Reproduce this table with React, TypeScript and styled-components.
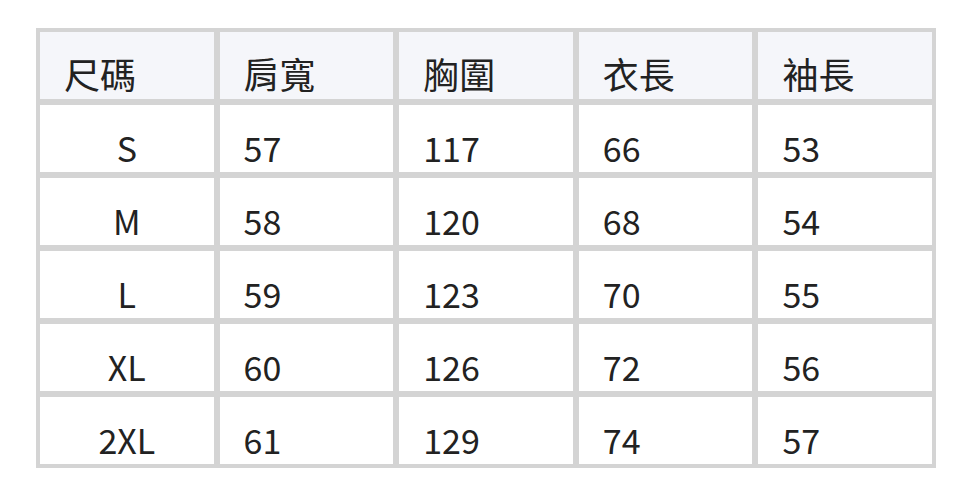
import React from "react";
import styled, { createGlobalStyle } from "styled-components";

const Global = createGlobalStyle`
  html, body { margin: 0; padding: 0; background: #ffffff; }
  body { font-family: "Noto Sans CJK TC", "Noto Sans", sans-serif; }
`;

const Page = styled.div`
  padding: 28px 0 0 36px;
`;

const Table = styled.div`
  display: grid;
  grid-template-columns: repeat(5, 1fr);
  grid-auto-rows: 67px;
  gap: 6px;
  padding: 4px;
  width: 900px;
  box-sizing: border-box;
  background: #d4d4d4;
`;

const Cell = styled.div<{ $head?: boolean; $center?: boolean }>`
  display: flex;
  align-items: flex-end;
  justify-content: ${(p) => (p.$center ? "center" : "flex-start")};
  padding: 0 24px ${(p) => (p.$head ? "0" : "0")};
  background: ${(p) => (p.$head ? "#f5f6fa" : "#ffffff")};
  color: #222222;
  font-family: "Noto Sans CJK TC", "Noto Sans", sans-serif;
  font-size: ${(p) => (p.$head ? "36px" : "34px")};
  line-height: ${(p) => (p.$head ? "44px" : "normal")};
  padding-bottom: ${(p) => (p.$head ? "4px" : "0")};
`;

const headers = ["尺碼", "肩寬", "胸圍", "衣長", "袖長"];
const rows = [
  ["S", "57", "117", "66", "53"],
  ["M", "58", "120", "68", "54"],
  ["L", "59", "123", "70", "55"],
  ["XL", "60", "126", "72", "56"],
  ["2XL", "61", "129", "74", "57"],
];

export default function App() {
  return (
    <>
      <Global />
      <Page>
        <Table>
          {headers.map((h) => (
            <Cell key={h} $head>
              {h}
            </Cell>
          ))}
          {rows.map((r) =>
            r.map((v, i) => (
              <Cell key={r[0] + i} $center={i === 0}>
                {v}
              </Cell>
            ))
          )}
        </Table>
      </Page>
    </>
  );
}
